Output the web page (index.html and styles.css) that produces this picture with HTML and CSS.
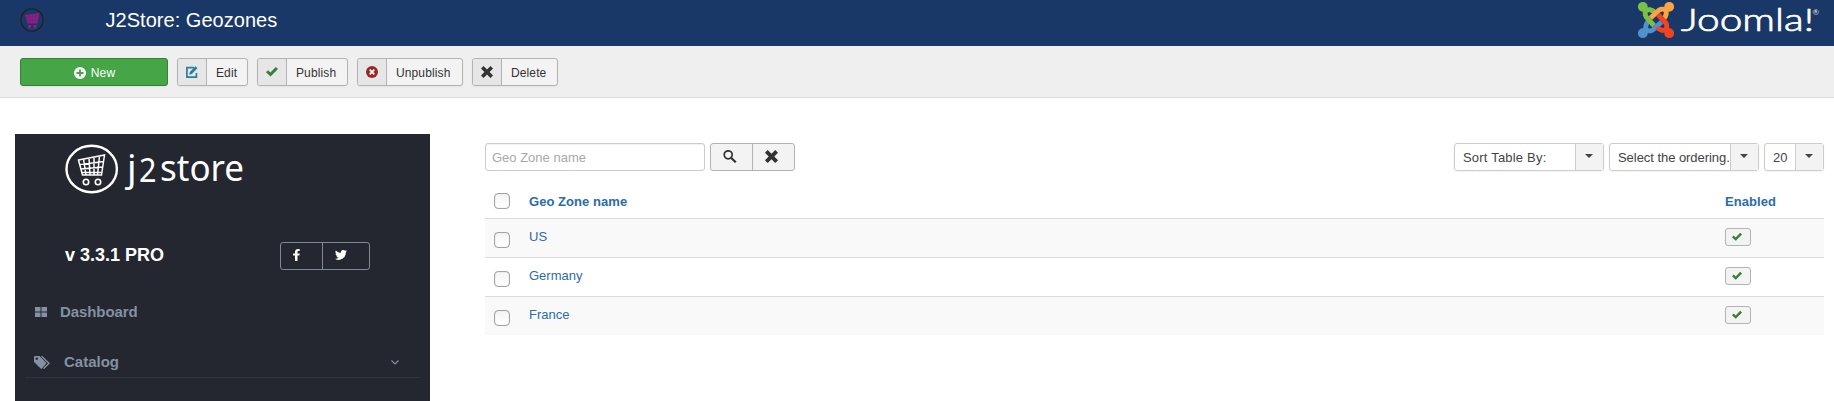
FILE: index.html
```html
<!DOCTYPE html>
<html lang="en">
<head>
<meta charset="utf-8">
<title>J2Store: Geozones</title>
<link rel="stylesheet" href="styles.css">
</head>
<body>
<svg class="defs" aria-hidden="true">
  <symbol id="check" viewBox="0 0 12 12"><path d="M0 6.300 2 4.300l2.400 2.200L9.800 1 12 3.100 4.500 10.600z"/></symbol>
  <symbol id="cross" viewBox="0 0 12 12"><path d="M2.500 0 6 3.400 9.500 0 12 2.500 8.600 6 12 9.500 9.500 12 6 8.600 2.500 12 0 9.500 3.400 6 0 2.500z"/></symbol>
  <symbol id="cart" viewBox="0 0 52 48">
    <path d="M13.500 16 39.500 11 36.500 31H17.500zM15 20.500l24-3M16 25l22-2M17 28.500h20M18.500 15l2.500 16M24 14l1 17M29 13v18M34.500 12l-2 19" fill="none" stroke="currentColor" stroke-width="1.500"/>
  </symbol>
</svg>
<header class="header">
  <svg class="brand" viewBox="0 0 24 24"><circle cx="12" cy="12" r="11.200" fill="none" stroke="#202631" stroke-width="1.600"/><path d="M5 7 19.500 5 17.500 15.500H7.500z" fill="#8b2080"/><path d="M6 9.500 19 8M7 12.200h11M9 7l1 8M12.500 6v9M16 6l-1 9" stroke="#6b2579" stroke-width=".5"/><path d="M8 17h3v3.200H8zM13.500 17h3v3.200h-3z" fill="#8b2080"/></svg>
  <h1 class="title">J2Store: Geozones</h1>
  <svg class="joomla" viewBox="0 0 180 42">
    <g fill="none" stroke-width="5">
      <g stroke="#5091cd" fill="#5091cd"><circle cx="8.800" cy="33.200" r="2.400"/><path fill="none" d="M14.500 21C11.500 24 11 28 12.500 30c2.500 1.500 6 1 8.500-2l6.500-6"/></g>
      <g stroke="#7ac143" fill="#7ac143"><circle cx="8.800" cy="6.800" r="2.400"/><path fill="none" d="M21 12.500C18 9.500 14 9 12 10.500c-1.500 2.500-1 6 2 8.500l6 6.500"/></g>
      <g stroke="#f9a541" fill="#f9a541"><circle cx="35.200" cy="6.800" r="2.400"/><path fill="none" d="M29.500 19c3-3 3.500-7 2-9-2.500-1.500-6-1-8.500 2l-6.500 6"/></g>
      <g stroke="#f44321" fill="#f44321"><circle cx="35.200" cy="33.200" r="2.400"/><path fill="none" d="M23 27.500c3 3 7 3.500 9 2 1.500-2.500 1-6-2-8.500l-6-6.500"/></g>
    </g>
    <text class="wordmark" x="47" y="31" textLength="133" lengthAdjust="spacingAndGlyphs">Joomla!</text>
    <text class="reg" x="178.500" y="15">®</text>
  </svg>
</header>
<nav class="toolbar">
  <button class="btn new"><svg viewBox="0 0 12 12" width="12" height="12"><circle cx="6" cy="6" r="6" fill="#fff"/><path d="M6 2.500v7M2.500 6h7" stroke="#46a546" stroke-width="1.800"/></svg>New</button>
  <button class="btn tool edit"><span class="pane"><svg viewBox="0 0 12 12" width="12" height="12"><path d="M8 1.600H.9v9.500h9.500V7" fill="none" stroke="#2a7f9e" stroke-width="1.700"/><path d="M3.200 8.800 3.800 6 9.500.3l2 2L5.800 8z" fill="#2a7f9e"/></svg></span><span class="label">Edit</span></button>
  <button class="btn tool publish"><span class="pane green"><svg width="12" height="12"><use href="#check"/></svg></span><span class="label">Publish</span></button>
  <button class="btn tool unpublish"><span class="pane"><svg viewBox="0 0 12 12" width="12" height="12"><circle cx="6" cy="6" r="6" fill="#942a25"/><path d="m3.700 3.700 4.600 4.600m0-4.600L3.700 8.300" stroke="#fff" stroke-width="1.700"/></svg></span><span class="label">Unpublish</span></button>
  <button class="btn tool delete"><span class="pane"><svg width="12" height="12"><use href="#cross"/></svg></span><span class="label">Delete</span></button>
</nav>
<div class="body">
  <aside class="sidebar">
    <svg class="logo" viewBox="0 0 200 58">
      <ellipse cx="26.700" cy="25" rx="25.200" ry="23.200" fill="none" stroke="#fff" stroke-width="2.400"/>
      <svg x="0" y="0" width="52" height="48" color="#fff"><use href="#cart"/></svg>
      <g fill="none" stroke="#fff" stroke-width="1.600"><circle cx="21" cy="38" r="2.700"/><circle cx="33" cy="38" r="2.700"/></g>
      <text x="62" y="37" class="logotext">j</text>
      <text x="74" y="38" class="logotwo" textLength="17.500" lengthAdjust="spacingAndGlyphs">2</text>
      <text x="95" y="37" class="logotext" textLength="84" lengthAdjust="spacingAndGlyphs">store</text>
    </svg>
    <div class="version"><strong>v 3.3.1 PRO</strong>
      <div class="social">
        <a class="fb"><svg viewBox="0 0 7 12" width="7" height="12"><path d="M2 12V6.500H0V4.400h2V3C2 1 3.200 0 5 0h1.700v2H5.500c-.8 0-1 .4-1 1v1.400h2.200l-.3 2.100H4.500V12z"/></svg></a>
        <a class="tw"><svg viewBox="0 0 24 20" width="12" height="10"><path d="M24 2.400a10 10 0 0 1-2.800.8A5 5 0 0 0 23.300.5a10 10 0 0 1-3.100 1.200 4.900 4.900 0 0 0-8.400 4.500A14 14 0 0 1 1.700 1a4.900 4.900 0 0 0 1.500 6.600A5 5 0 0 1 1 7c0 2.300 1.600 4.400 3.900 4.900a5 5 0 0 1-2.200.1 4.900 4.900 0 0 0 4.600 3.400A10 10 0 0 1 0 17.400a14 14 0 0 0 21.500-12.400A10 10 0 0 0 24 2.400z"/></svg></a>
      </div>
    </div>
    <a class="nav dash"><svg viewBox="0 0 12 10" width="12" height="10"><path d="M0 0h5.500v4.500H0zM6.500 0H12v4.500H6.500zM0 5.500h5.500V10H0zM6.500 5.500H12V10H6.500z"/></svg>Dashboard</a>
    <a class="nav catalog"><svg viewBox="0 0 16 13" width="16" height="13"><path fill-rule="evenodd" d="M0 1Q0 0 1 0h4.500l6.500 6.500q.6.700 0 1.300L8 12.500q-.7.600-1.400 0L0 6zM2.700 1.500a1.200 1.200 0 1 0 .1 2.400 1.200 1.200 0 0 0-.1-2.400z"/><path d="m7.500.200 7.500 7-5.500 5.500" fill="none" stroke="currentColor" stroke-width="1.400"/></svg><span>Catalog</span><svg class="chev" viewBox="0 0 8 5" width="8" height="5"><path d="m.5.500 3.500 3.500L7.500.500" fill="none" stroke="currentColor" stroke-width="1.200"/></svg></a>
  </aside>
  <main class="main">
    <div class="filters">
      <input class="search" type="text" placeholder="Geo Zone name">
      <div class="group">
        <button class="gbtn"><svg viewBox="0 0 14 13" width="14" height="13"><circle cx="5.200" cy="4.800" r="4" fill="none" stroke="#333" stroke-width="1.700"/><path d="m8 7.700 4.800 4.600" stroke="#333" stroke-width="2.200"/></svg></button>
        <button class="gbtn"><svg width="13" height="13"><use href="#cross"/></svg></button>
      </div>
      <div class="select wide first"><span>Sort Table By:</span><i></i></div>
      <div class="select wide order"><span>Select the ordering.</span><i></i></div>
      <div class="select num"><span>20</span><i></i></div>
    </div>
    <div class="table">
      <div class="row head"><span class="box"></span><a class="name">Geo Zone name</a><a class="state">Enabled</a></div>
      <div class="row odd"><span class="box"></span><a class="name">US</a><span class="state"><button class="micro"><svg width="10" height="10"><use href="#check"/></svg></button></span></div>
      <div class="row"><span class="box"></span><a class="name">Germany</a><span class="state"><button class="micro"><svg width="10" height="10"><use href="#check"/></svg></button></span></div>
      <div class="row odd"><span class="box"></span><a class="name">France</a><span class="state"><button class="micro"><svg width="10" height="10"><use href="#check"/></svg></button></span></div>
    </div>
  </main>
</div>
</body>
</html>
```
FILE: styles.css
```css
* { box-sizing: border-box; }
body { margin: 0; height: 401px; overflow: hidden; background: #fff; color: #333; font: 13px/18px "Liberation Sans", Arial, sans-serif; }
svg { display: block; flex: none; }
.defs { width: 0; height: 0; position: absolute; }
button { font: inherit; color: inherit; padding: 0; }
.header { height: 46px; background: #1a3867; display: flex; align-items: flex-start; padding-left: 20px; }
.brand { width: 24px; height: 24px; margin-top: 8px; }
.title { margin: 4px 0 0 61.500px; font-size: 20px; line-height: 32px; font-weight: 400; color: #fff; letter-spacing: .03px; }
.joomla { width: 180px; height: 42px; margin: 0 20px 0 auto; overflow: visible; }
.wordmark { font: 300 30.500px Lato, sans-serif; fill: #fff; stroke: #fff; stroke-width: .7px; }
.reg { font: 8px Lato, sans-serif; fill: #dde3ec; }
.toolbar { height: 52px; background: #efefef; border-bottom: 1px solid #dcdcdc; padding: 12px 20px; display: flex; gap: 9px; }
.btn { height: 28px; border: 1px solid #b3b3b3; border-radius: 3px; background: #f3f3f3; font-size: 12px; display: flex; box-shadow: 0 1px 2px rgba(0,0,0,.05); }
.new { width: 148px; background: #46a546; border-color: #368136; color: #fff; align-items: center; justify-content: center; gap: 5px; padding: 1px 0 0 1px; letter-spacing: .1px; }
.edit { width: 71px; }
.publish { width: 91px; }
.unpublish { width: 106px; }
.delete { width: 86px; }
.pane { width: 29px; height: 26px; padding-right: 1px; background: #e6e6e6; border-right: 1px solid #b3b3b3; border-radius: 3px 0 0 3px; display: flex; align-items: center; justify-content: center; }
.green { color: #378137; fill: #378137; }
.label { padding-left: 9px; line-height: 28px; letter-spacing: .12px; }
.tool svg { fill: currentColor; }
.body { display: flex; height: 303px; padding: 36px 10px 0 15px; }
.sidebar { width: 415px; height: 267px; background: #24272f; color: #8391a2; padding-top: 10px; }
.logo { width: 200px; height: 58px; margin-left: 50px; overflow: visible; }
.logotext { font: 37px "Noto Sans", sans-serif; fill: #fff; }
.logotwo { font: 32px "Noto Sans", sans-serif; fill: #fff; }
.version { margin: 40px 60px 0 50px; display: flex; justify-content: space-between; color: #fff; font-size: 18px; line-height: 26px; }
.social { width: 90px; height: 28px; border: 1px solid #7b8998; border-radius: 3px; display: flex; fill: #fff; }
.fb { width: 42px; border-right: 1px solid #7b8998; padding: 6px 0 0 12px; }
.tw { padding: 7px 0 0 12px; }
.nav { display: flex; align-items: center; font-size: 15px; line-height: 20px; font-weight: 700; fill: currentColor; }
.dash { margin: 32px 0 0 20px; gap: 13px; letter-spacing: -.08px; }
.catalog { margin: 30px 10px 0 10px; padding: 0 21px 5px 9px; border-bottom: 1px solid #31343a; gap: 14px; }
.chev { margin-left: auto; }
.main { margin-left: 55px; flex: 1; padding-top: 9px; }
.filters { display: flex; height: 28px; }
.search { width: 220px; height: 28px; border: 1px solid #ccc; border-radius: 3px; padding: 0 6px; font: inherit; box-shadow: inset 0 1px 1px rgba(0,0,0,.06); }
.search::placeholder { color: #a9a9a9; opacity: 1; }
.group { margin-left: 5px; width: 85px; display: flex; border: 1px solid #b3b3b3; border-radius: 3px; background: #f3f3f3; overflow: hidden; }
.gbtn { border: 0; background: none; width: 41px; padding: 0 0 2px 12px; fill: #333; }
.gbtn:first-child { width: 42px; border-right: 1px solid #b3b3b3; }
.select { height: 28px; border: 1px solid #ccc; border-radius: 3px; margin-left: 5px; display: flex; color: #444; box-shadow: 0 1px 2px rgba(0,0,0,.05); }
.first { margin-left: auto; letter-spacing: .2px; }
.wide { width: 150px; }
.num { width: 60px; }
.select span { flex: 1; min-width: 0; padding-left: 8px; line-height: 27px; white-space: nowrap; }
.order { letter-spacing: -.05px; }
.select i { flex: none; width: 28px; background: #f3f3f3; border-left: 1px solid #ccc; display: flex; align-items: center; justify-content: center; padding: 0 2px 2px 0; }
.select i::before { content: ""; border: 4px solid transparent; border-top-color: #444; border-bottom: 0; }
.table { margin-top: 9px; }
.row { height: 39px; border-top: 1px solid #ddd; display: flex; padding: 9px; color: #2a6cae; }
.odd { background: #f9f9f9; }
.head { height: 38px; border: 0; font-weight: 700; padding-top: 13px; letter-spacing: .05px; }
.box { width: 16px; height: 16px; margin-top: 4px; border: 1px solid #a4a4a4; border-radius: 4px; background: linear-gradient(#f4f4f4, #fff); box-shadow: inset 0 0 1px #aaa; }
.head .box { margin-top: 0; }
.name { margin-left: 19px; width: 1196px; }
.micro { width: 26px; height: 18px; border: 1px solid #b3b3b3; border-radius: 3px; background: #f3f3f3; padding-left: 6px; fill: #378137; display: block; }
```
